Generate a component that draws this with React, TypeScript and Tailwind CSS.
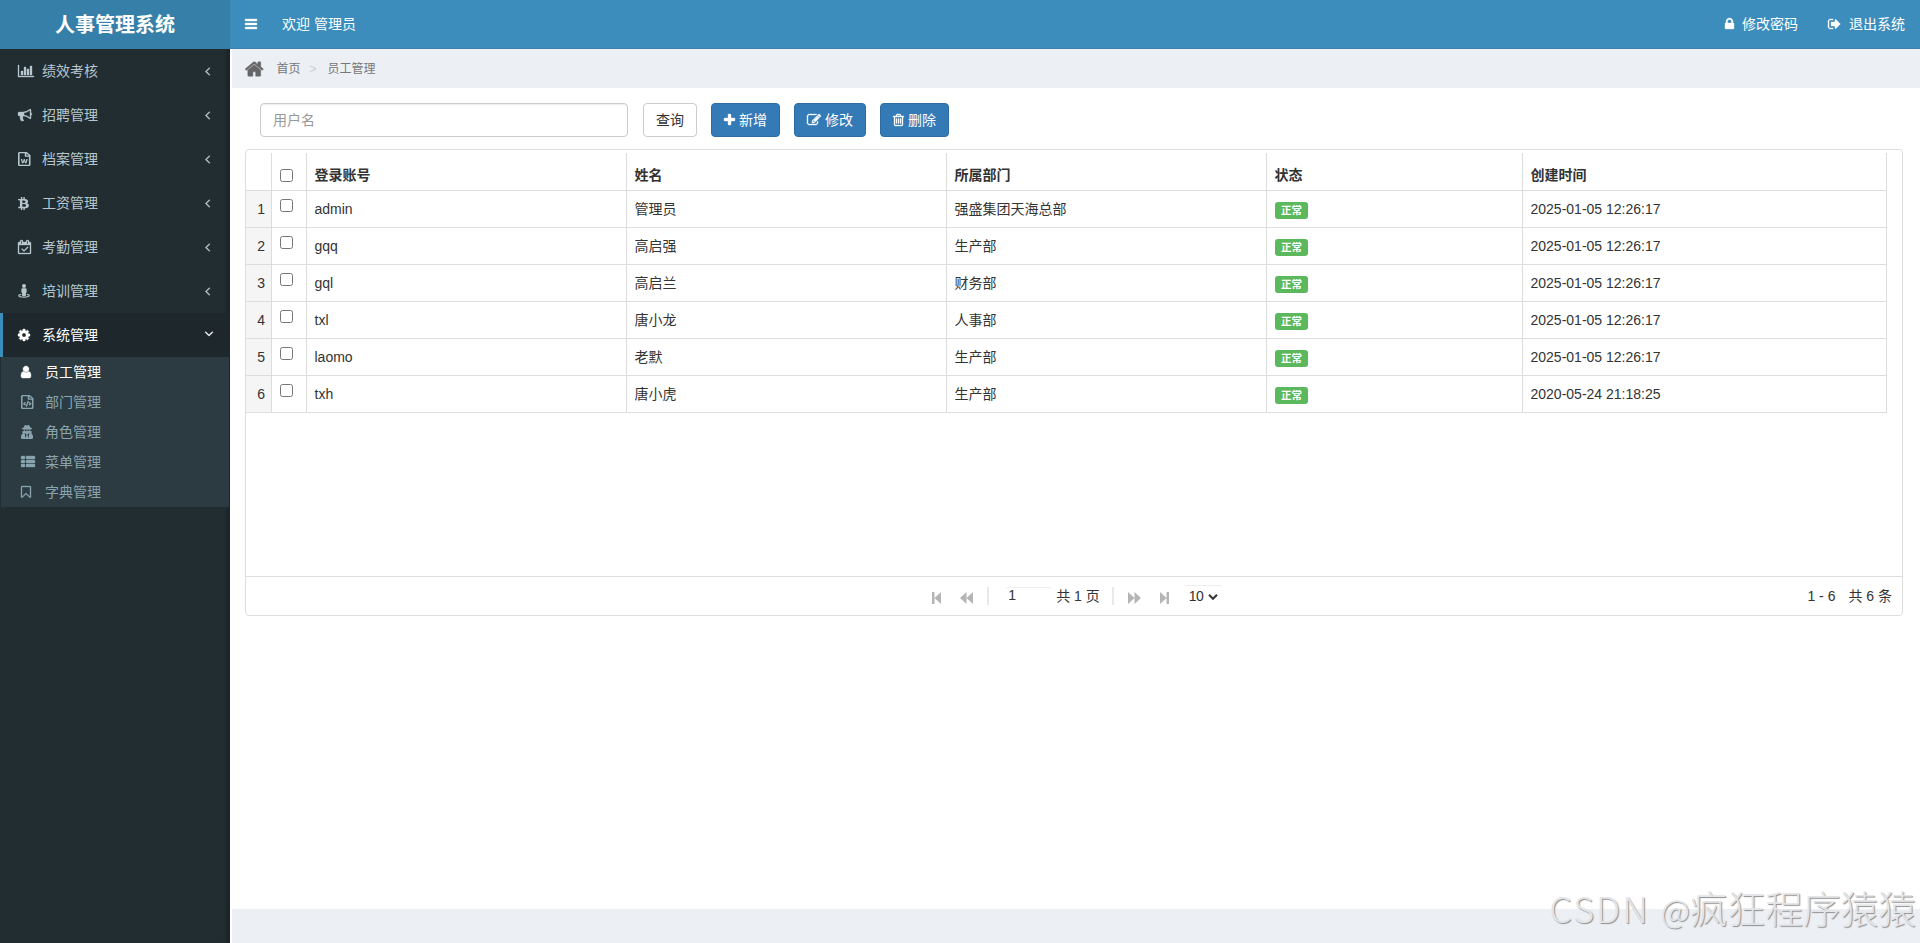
import { FaBtc, FaRegFileCode, FaRegFileWord, FaUserSecret } from "react-icons/fa";
import type { ReactNode } from "react";

type Glyph = { d: string; x: number; w: number };

const glyphs: Record<string, Glyph> = {
  chart: {
    x: 0,
    w: 2048,
    d: "M640 896v512h-256v-512h256zm384-512v1024h-256v-1024h256zm1024 1152v128h-2048v-1536h128v1408h1920zm-640-896v768h-256v-768h256zm384-384v1152h-256v-1152h256z",
  },
  bullhorn: {
    x: 0,
    w: 1792,
    d: "M1664 640q53 0 90.5 37.5t37.5 90.5-37.5 90.5-90.5 37.5v384q0 52-38 90t-90 38q-417-347-812-380-58 19-91 66t-31 100.5 40 92.5q-20 33-23 65.5t6 58 33.5 55 48 50 61.5 50.5q-29 58-111.5 83t-168.5 11.5-132-55.5q-7-23-29.5-87.5t-32-94.5-23-89-15-101 3.5-98.5 22-110.5h-122q-66 0-113-47t-47-113v-192q0-66 47-113t113-47h480q435 0 896-384 52 0 90 38t38 90v384zm-128 604v-954q-394 302-768 343v270q377 42 768 341z",
  },
  calendar: {
    x: 0,
    w: 1664,
    d: "M1303 964l-512 512q-10 9-23 9t-23-9l-288-288q-9-10-9-23t9-22l46-46q9-9 22-9t23 9l220 220 444-444q10-9 23-9t22 9l46 46q9 9 9 22t-9 23zm-1175 700h1408v-1024h-1408v1024zm384-1216v-288q0-14-9-23t-23-9h-64q-14 0-23 9t-9 23v288q0 14 9 23t23 9h64q14 0 23-9t9-23zm768 0v-288q0-14-9-23t-23-9h-64q-14 0-23 9t-9 23v288q0 14 9 23t23 9h64q14 0 23-9t9-23zm384-64v1280q0 52-38 90t-90 38h-1408q-52 0-90-38t-38-90v-1280q0-52 38-90t90-38h128v-96q0-66 47-113t113-47h64q66 0 113 47t47 113v96h384v-96q0-66 47-113t113-47h64q66 0 113 47t47 113v96h128q52 0 90 38t38 90z",
  },
  cog: {
    x: 128,
    w: 1536,
    d: "M1152 896q0-106-75-181t-181-75-181 75-75 181 75 181 181 75 181-75 75-181zm512-109v222q0 12-8 23t-20 13l-185 28q-19 54-39 91 35 50 107 138 10 12 10 25t-9 23q-27 37-99 108t-94 71q-12 0-26-9l-138-108q-44 23-91 38-16 136-29 186-7 28-36 28h-222q-14 0-24.5-8.5t-11.5-21.5l-28-184q-49-16-90-37l-141 107q-10 9-25 9-14 0-25-11-126-114-165-168-7-10-7-23 0-12 8-23 15-21 51-66.5t54-70.5q-27-50-41-99l-183-27q-13-2-21-12.5t-8-23.5v-222q0-12 8-23t19-13l186-28q14-46 39-92-40-57-107-138-10-12-10-24 0-10 9-23 26-36 98.5-107.5t94.5-71.5q13 0 26 10l138 107q44-23 91-38 16-136 29-186 7-28 36-28h222q14 0 24.5 8.5t11.5 21.5l28 184q49 16 90 37l142-107q9-9 24-9 13 0 25 10 129 119 165 170 7 8 7 22 0 12-8 23-15 21-51 66.5t-54 70.5q26 50 41 98l183 28q13 2 21 12.5t8 23.5z",
  },
  user: {
    x: 256,
    w: 1280,
    d: "M1536 1399q0 109-62.5 187t-150.5 78h-854q-88 0-150.5-78t-62.5-187q0-85 8.5-160.5t31.5-152 58.5-131 94-89 134.5-34.5q131 128 313 128t313-128q76 0 134.5 34.5t94 89 58.5 131 31.5 152 8.5 160.5zm-256-887q0 159-112.5 271.5t-271.5 112.5-271.5-112.5-112.5-271.5 112.5-271.5 271.5-112.5 271.5 112.5 112.5 271.5z",
  },
  thList: {
    x: 0,
    w: 1792,
    d: "M512 1248v192q0 40-28 68t-68 28h-320q-40 0-68-28t-28-68v-192q0-40 28-68t68-28h320q40 0 68 28t28 68zm0-512v192q0 40-28 68t-68 28h-320q-40 0-68-28t-28-68v-192q0-40 28-68t68-28h320q40 0 68 28t28 68zm1280 512v192q0 40-28 68t-68 28h-960q-40 0-68-28t-28-68v-192q0-40 28-68t68-28h960q40 0 68 28t28 68zm-1280-1024v192q0 40-28 68t-68 28h-320q-40 0-68-28t-28-68v-192q0-40 28-68t68-28h320q40 0 68 28t28 68zm1280 512v192q0 40-28 68t-68 28h-960q-40 0-68-28t-28-68v-192q0-40 28-68t68-28h960q40 0 68 28t28 68zm0-512v192q0 40-28 68t-68 28h-960q-40 0-68-28t-28-68v-192q0-40 28-68t68-28h960q40 0 68 28t28 68z",
  },
  bookmark: {
    x: 256,
    w: 1280,
    d: "M1408 256h-1024v1242l423-406 89-85 89 85 423 406v-1242zm12-128q23 0 44 9 33 13 52.5 41t19.5 62v1289q0 34-19.5 62t-52.5 41q-19 8-44 8-48 0-83-32l-441-424-441 424q-36 33-83 33-23 0-44-9-33-13-52.5-41t-19.5-62v-1289q0-34 19.5-62t52.5-41q21-9 44-9h1048z",
  },
  bars: {
    x: 128,
    w: 1536,
    d: "M1664 1344v128q0 26-19 45t-45 19h-1408q-26 0-45-19t-19-45v-128q0-26 19-45t45-19h1408q26 0 45 19t19 45zm0-512v128q0 26-19 45t-45 19h-1408q-26 0-45-19t-19-45v-128q0-26 19-45t45-19h1408q26 0 45 19t19 45zm0-512v128q0 26-19 45t-45 19h-1408q-26 0-45-19t-19-45v-128q0-26 19-45t45-19h1408q26 0 45 19t19 45z",
  },
  home: {
    x: 64,
    w: 1664,
    d: "M1472 992v480q0 26-19 45t-45 19h-384v-384h-256v384h-384q-26 0-45-19t-19-45v-480q0-1 .5-3t.5-3l575-474 575 474q1 2 1 6zm223-69l-62 74q-8 9-21 11h-3q-13 0-21-7l-692-577-692 577q-12 8-24 7-13-2-21-11l-62-74q-8-10-7-23.5t11-21.5l719-599q32-26 76-26t76 26l244 204v-195q0-14 9-23t23-9h192q14 0 23 9t9 23v408l219 182q10 8 11 21.5t-7 23.5z",
  },
  lock: {
    x: 320,
    w: 1152,
    d: "M640 768h512v-192q0-106-75-181t-181-75-181 75-75 181v192zm832 96v576q0 40-28 68t-68 28h-960q-40 0-68-28t-28-68v-576q0-40 28-68t68-28h32v-192q0-184 132-316t316-132 316 132 132 316v192h32q40 0 68 28t28 68z",
  },
  signOut: {
    x: 64,
    w: 1664,
    d: "M704 1440q0 4 1 20t.5 26.5-3 23.5-10 19.5-20.5 6.5h-320q-119 0-203.5-84.5t-84.5-203.5v-704q0-119 84.5-203.5t203.5-84.5h320q13 0 22.5 9.5t9.5 22.5q0 4 1 20t.5 26.5-3 23.5-10 19.5-20.5 6.5h-320q-66 0-113 47t-47 113v704q0 66 47 113t113 47h312l11.5 1 11.5 3 8 5.5 7 9 2 13.5zm928-544q0 26-19 45l-544 544q-19 19-45 19t-45-19-19-45v-288h-448q-26 0-45-19t-19-45v-384q0-26 19-45t45-19h448v-288q0-26 19-45t45-19 45 19l544 544q19 19 19 45z",
  },
  plus: {
    x: 192,
    w: 1408,
    d: "M1600 736v192q0 40-28 68t-68 28h-416v416q0 40-28 68t-68 28h-192q-40 0-68-28t-28-68v-416h-416q-40 0-68-28t-28-68v-192q0-40 28-68t68-28h416v-416q0-40 28-68t68-28h192q40 0 68 28t28 68v416h416q40 0 68 28t28 68z",
  },
  edit: {
    x: 0,
    w: 1792,
    d: "M888 1184l116-116-152-152-116 116v56h96v96h56zm440-720q-16-16-33 1l-350 350q-17 17-1 33t33-1l350-350q17-17 1-33zm80 594v190q0 119-84.5 203.5t-203.5 84.5h-832q-119 0-203.5-84.5t-84.5-203.5v-832q0-119 84.5-203.5t203.5-84.5h832q63 0 117 25 15 7 18 23 3 17-9 29l-49 49q-14 14-32 8-23-6-45-6h-832q-66 0-113 47t-47 113v832q0 66 47 113t113 47h832q66 0 113-47t47-113v-126q0-13 9-22l64-64q15-15 35-7t20 29zm-96-738l288 288-672 672h-288v-288zm444 132l-92 92-288-288 92-92q28-28 68-28t68 28l152 152q28 28 28 68t-28 68z",
  },
  trash: {
    x: 192,
    w: 1408,
    d: "M704 736v576q0 14-9 23t-23 9h-64q-14 0-23-9t-9-23v-576q0-14 9-23t23-9h64q14 0 23 9t9 23zm256 0v576q0 14-9 23t-23 9h-64q-14 0-23-9t-9-23v-576q0-14 9-23t23-9h64q14 0 23 9t9 23zm256 0v576q0 14-9 23t-23 9h-64q-14 0-23-9t-9-23v-576q0-14 9-23t23-9h64q14 0 23 9t9 23zm128 724v-948h-896v948q0 22 7 40.5t14.5 27 10.5 8.5h832q3 0 10.5-8.5t14.5-27 7-40.5zm-672-1076h448l-48-117q-7-9-17-11h-317q-10 2-17 11zm928 32v64q0 14-9 23t-23 9h-96v948q0 83-47 143.5t-113 60.5h-832q-66 0-113-58.5t-47-141.5v-952h-96q-14 0-23-9t-9-23v-64q0-14 9-23t23-9h309l70-167q15-37 54-63t79-26h320q40 0 79 26t54 63l70 167h309q14 0 23 9t9 23z",
  },
  angle: {
    x: 576,
    w: 640,
    d: "M1203 544q0 13-10 23l-393 393 393 393q10 10 10 23t-10 23l-50 50q-10 10-23 10t-23-10l-466-466q-10-10-10-23t10-23l466-466q10-10 23-10t23 10l50 50q10 10 10 23z",
  },
};

function Icon({ name, className = "h-3.5" }: { name: string; className?: string }) {
  const g = glyphs[name];
  return (
    <svg
      viewBox={`${g.x} 0 ${g.w} 1792`}
      fill="currentColor"
      stroke="currentColor"
      strokeWidth="44"
      className={`inline-block w-auto shrink-0 overflow-visible ${className}`}
    >
      <path d={g.d} />
    </svg>
  );
}

// person standing on a ring
function StreetView() {
  return (
    <svg viewBox="0 0 12 14" className="h-3.5 w-3" fill="currentColor">
      <circle cx="6" cy="2" r="2" />
      <path d="M4.4 4.2h3.2q1 0 1 1v3q0 .6-.7.6v2.6q0 .6-.6.6H4.7q-.6 0-.6-.6V8.800q-.7 0-.7-.6v-3q0-1 1-1z" />
      <path d="M3.200 10.300C1.700 10.600.8 11 .8 11.600c0 .9 2.300 1.600 5.200 1.600s5.200-.7 5.200-1.600c0-.6-.9-1-2.400-1.300" fill="none" stroke="currentColor" strokeWidth="1.300" />
    </svg>
  );
}

const menus: { name: string; icon: ReactNode }[] = [
  { name: "绩效考核", icon: <Icon name="chart" /> },
  { name: "招聘管理", icon: <Icon name="bullhorn" /> },
  { name: "档案管理", icon: <FaRegFileWord preserveAspectRatio="none" className="h-3.5 w-[12.5px]" /> },
  { name: "工资管理", icon: <FaBtc preserveAspectRatio="none" className="h-[13px] w-[11px]" /> },
  { name: "考勤管理", icon: <Icon name="calendar" /> },
  { name: "培训管理", icon: <StreetView /> },
];

const subMenus: { name: string; icon: ReactNode; active?: boolean }[] = [
  { name: "员工管理", icon: <Icon name="user" />, active: true },
  { name: "部门管理", icon: <FaRegFileCode preserveAspectRatio="none" className="h-3.5 w-[12.5px]" /> },
  { name: "角色管理", icon: <FaUserSecret preserveAspectRatio="none" className="h-3.5 w-3" /> },
  { name: "菜单管理", icon: <Icon name="thList" /> },
  { name: "字典管理", icon: <Icon name="bookmark" /> },
];

const columns = ["登录账号", "姓名", "所属部门", "状态", "创建时间"];

const users = [
  { account: "admin", name: "管理员", dept: "强盛集团天海总部", time: "2025-01-05 12:26:17" },
  { account: "gqq", name: "高启强", dept: "生产部", time: "2025-01-05 12:26:17" },
  { account: "gql", name: "高启兰", dept: "财务部", time: "2025-01-05 12:26:17" },
  { account: "txl", name: "唐小龙", dept: "人事部", time: "2025-01-05 12:26:17" },
  { account: "laomo", name: "老默", dept: "生产部", time: "2025-01-05 12:26:17" },
  { account: "txh", name: "唐小虎", dept: "生产部", time: "2020-05-24 21:18:25" },
];

const grid = "grid grid-cols-[26px_35px_320px_320px_320px_256px_364px] w-[1641px]";
const cell = "border-r border-[#ddd] pl-[7.5px]";

function Checkbox() {
  return <span className="block size-[13px] rounded-[2.5px] border border-[#767676] bg-white" />;
}

function Header() {
  return (
    <header className="flex h-[49px] text-white">
      <div className="flex w-[230px] shrink-0 items-center justify-center bg-[#367fa9] text-xl font-bold">
        人事管理系统
      </div>
      <nav className="flex grow items-center border-b border-[#3a82ad] bg-[#3c8dbc] pr-[15px] pl-[15px]">
        <Icon name="bars" />
        <span className="ml-[25px]">欢迎 管理员</span>
        <a className="ml-auto flex items-center">
          <Icon name="lock" />
          <span className="ml-2">修改密码</span>
        </a>
        <a className="ml-[30px] flex items-center">
          <Icon name="signOut" />
          <span className="ml-2">退出系统</span>
        </a>
      </nav>
    </header>
  );
}

function Sidebar() {
  return (
    <aside className="w-[230px] shrink-0 bg-[#222d32] text-[#b8c7ce] shadow-[inset_-6px_0_3px_-2px_rgba(0,0,0,0.18)]">
      <ul>
        {menus.map((m) => (
          <li key={m.name} className="flex h-11 items-center border-l-3 border-transparent pl-[15px] pr-5">
            <span className="flex w-6">{m.icon}</span>
            {m.name}
            <Icon name="angle" className="mb-px ml-auto h-3.5" />
          </li>
        ))}
        <li className="flex h-11 items-center border-l-3 border-[#3c8dbc] bg-[#1e282c] pl-[15px] pr-[19px] text-white">
          <span className="flex w-6">
            <Icon name="cog" />
          </span>
          系统管理
          <Icon name="angle" className="mb-0.5 ml-auto h-3.5 -rotate-90" />
        </li>
      </ul>
      <ul className="mx-px bg-[#2c3b41] pl-5 text-[#8aa4af]">
        {subMenus.map((m) => (
          <li key={m.name} className={`flex h-[30px] items-center ${m.active ? "text-white" : ""}`}>
            <span className="flex w-6">{m.icon}</span>
            {m.name}
          </li>
        ))}
      </ul>
    </aside>
  );
}

function Toolbar() {
  const primary = "flex h-[34px] items-center gap-1 rounded-[4px] border border-[#2e6da4] bg-[#337ab7] px-3 text-white";
  return (
    <div className="flex pl-[15px]">
      <input
        placeholder="用户名"
        className="mr-[15px] h-[34px] w-[368px] rounded-[4px] border border-[#ccc] px-3 shadow-[inset_0_1px_1px_rgba(0,0,0,0.075)] placeholder:text-[#999]"
      />
      <button className="mr-3.5 h-[34px] w-[54px] rounded-[4px] border border-[#ccc]">查询</button>
      <button className={`mr-3.5 w-[69px] ${primary}`}>
        <Icon name="plus" />
        <span className="whitespace-nowrap">新增</span>
      </button>
      <button className={`mr-3.5 w-[72px] ${primary}`}>
        <Icon name="edit" />
        <span className="whitespace-nowrap">修改</span>
      </button>
      <button className={`w-[69px] ${primary}`}>
        <Icon name="trash" />
        <span className="whitespace-nowrap">删除</span>
      </button>
    </div>
  );
}

function Pager() {
  return (
    <div className="flex h-[39px] items-center border-t border-[#ddd]">
      <div className="flex-1" />
      <div className="ml-[17px] flex items-center text-[#b5b5b5]">
        <svg viewBox="0 0 9 12" className="mt-1 h-3 w-[9px]" fill="currentColor">
          <path d="M0 0h2.5v12H0zM9 0v12L2.5 6z" />
        </svg>
        <svg viewBox="0 0 13 12" className="mt-1 ml-[19px] h-3 w-[13px]" fill="currentColor">
          <path d="M6.5 0v12L0 6zM13 0v12L6.5 6z" />
        </svg>
        <span className="ml-3.5 h-[18px] w-0.5 bg-[#e9e9e9]" />
        <span className="ml-4 h-[18px] w-[47px] rounded-[3px] border-t border-[#eee] pl-[3px] leading-[15px] text-[#333]">
          1
        </span>
        <span className="ml-1 text-[#333]">共 1 页</span>
        <span className="ml-3 h-[18px] w-0.5 bg-[#e9e9e9]" />
        <svg viewBox="0 0 13 12" className="mt-1 ml-3.5 h-3 w-[13px]" fill="currentColor">
          <path d="M0 0v12l6.5-6zM6.5 0v12l6.5-6z" />
        </svg>
        <svg viewBox="0 0 9 12" className="mt-1 ml-[19px] h-3 w-[9px]" fill="currentColor">
          <path d="M6.5 0h2.5v12H6.500zM0 0v12l6.5-6z" />
        </svg>
        <span className="mb-0.5 ml-3.5 flex h-[21px] w-10 items-center rounded-[4px] border-t border-[#eee] pl-1.5 text-[#333]">
          <span className="tracking-[-0.5px]">10</span>
          <svg viewBox="0 0 10 6" className="mt-0.5 ml-[5px] h-1.5 w-2.5" fill="none" stroke="currentColor" strokeWidth="2">
            <path d="M1 .8l4 4 4-4" />
          </svg>
        </span>
      </div>
      <div className="flex-1 pr-2.5 text-right text-[#333]">
        1 - 6<span className="ml-[13px]">共 6 条</span>
      </div>
    </div>
  );
}

function UserTable() {
  return (
    <div className="mt-3 flex h-[467px] w-[1658px] flex-col rounded-[4px] border border-[#ddd]">
      <div className="grow pt-[3px]">
        <div className={`h-[38px] border-b border-[#ddd] font-bold ${grid}`}>
          <div className="border-r border-[#ddd]" />
          <div className="border-r border-[#ddd] pt-4 pl-2">
            <Checkbox />
          </div>
          {columns.map((c) => (
            <div key={c} className={`pt-3 leading-5 ${cell}`}>
              {c}
            </div>
          ))}
        </div>
        {users.map((u, i) => (
          <div key={u.account} className={`h-[37px] border-b border-[#ddd] leading-9 ${grid}`}>
            <div className="border-r border-[#ddd] bg-[#f5f5f5] pr-1.5 text-right">{i + 1}</div>
            <div className="border-r border-[#ddd] pt-2 pl-2">
              <Checkbox />
            </div>
            <div className={cell}>{u.account}</div>
            <div className={cell}>{u.name}</div>
            <div className={cell}>{u.dept}</div>
            <div className="border-r border-[#ddd] pt-[11px] pl-2">
              <span className="flex h-[17px] w-[33px] items-center justify-center rounded-[3px] bg-[#5cb85c] pb-px text-[10.5px] leading-4 font-bold text-white">
                正常
              </span>
            </div>
            <div className={cell}>{u.time}</div>
          </div>
        ))}
      </div>
      <Pager />
    </div>
  );
}

export default function App() {
  return (
    <div className="relative flex h-[943px] w-[1920px] flex-col overflow-hidden bg-white font-['Liberation_Sans','Noto_Sans_CJK_SC',sans-serif] text-sm text-[#333]">
      <Header />
      <div className="flex grow">
        <Sidebar />
        <main className="ml-0.5 flex grow flex-col">
          <div className="flex h-[39px] items-center bg-[#ecf0f5] pl-[13px] text-xs text-[#777]">
            <Icon name="home" className="h-5 text-[#666]" />
            <span className="ml-[13px]">首页</span>
            <span className="ml-[9px] text-[#ccc]">&gt;</span>
            <span className="ml-[11px]">员工管理</span>
          </div>
          <div className="grow pt-[15px] pl-[13px]">
            <Toolbar />
            <UserTable />
          </div>
          <footer className="h-[34px] bg-[#ecf0f5]" />
        </main>
      </div>
      <div className="absolute right-1 bottom-[7px] flex items-baseline font-['Noto_Sans_CJK_SC',sans-serif] text-[37.7px] leading-[54px] font-light text-[#e4e5e8] [text-shadow:1px_1px_1px_#8e8e8e]">
        <span className="mr-[11px] text-[36px] tracking-[2px]">CSDN</span>
        <span className="text-[32px]">@</span>
        疯狂程序猿猿
      </div>
    </div>
  );
}
